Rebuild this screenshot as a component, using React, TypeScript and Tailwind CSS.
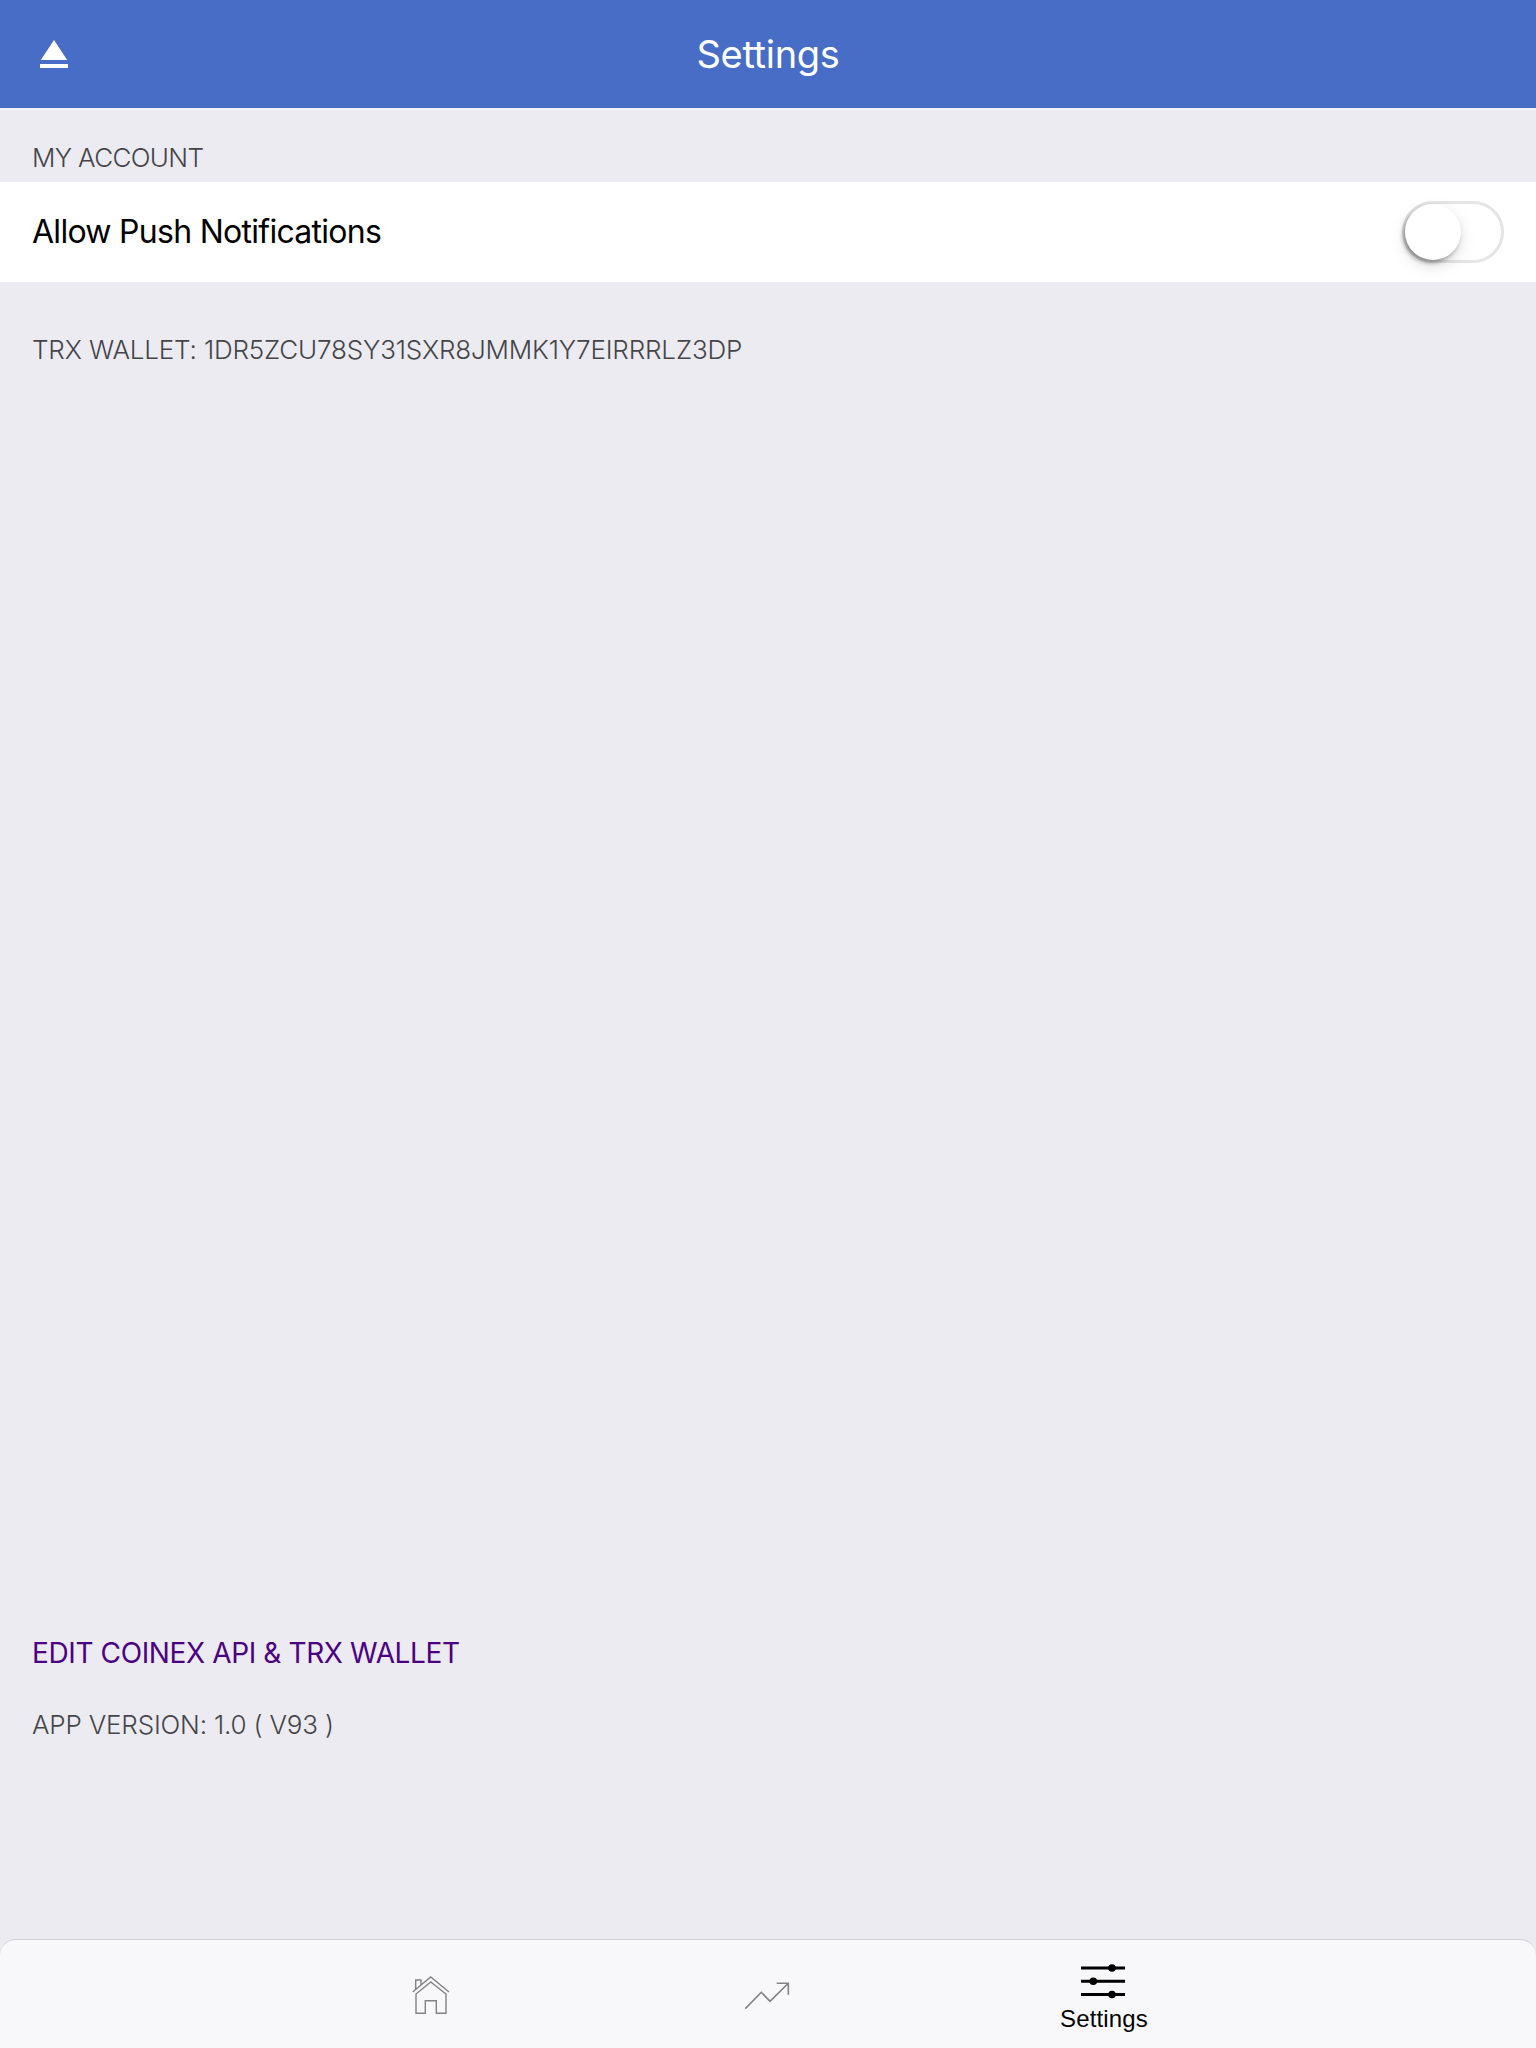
function EjectIcon() {
  return (
    <svg className="ml-10 h-7 w-7" viewBox="0 0 28 28" fill="currentColor">
      <path d="M14 0L27.2 20H.8zM0 24h28v4H0z" />
    </svg>
  );
}

function HomeIcon() {
  return (
    <svg className="mt-[34px] h-[42px] w-[42px]" viewBox="0 0 42 42" fill="none" stroke="#828284" strokeWidth="1.4">
      <path d="M1.7 18L19.7 3 38 18M19.7 8L5 20V39.3h9.3V26.7h11v12.6H35V20zM4.7 15.3V6H10v5" />
    </svg>
  );
}

function TrendIcon() {
  return (
    <svg className="mt-[42px] h-7 w-[46px]" viewBox="0 0 46 28" fill="none" stroke="#828284" strokeWidth="1.6">
      <path d="M.3 26.7L16.3 10.3 25 19.3 43.3 1.3M31.7 1.3H43.3V12.7" />
    </svg>
  );
}

function SlidersIcon() {
  return (
    <svg className="mt-[24px] h-9 w-[46px]" viewBox="0 0 46 36" fill="currentColor">
      <path d="M0 2.5h44v3H0zM0 15.7h44v3H0zM0 29h44v3H0z" />
      <circle cx="31" cy="4" r="3.8" />
      <circle cx="12.3" cy="17.2" r="3.8" />
      <circle cx="31" cy="30.5" r="3.8" />
    </svg>
  );
}

export default function App() {
  return (
    <div className="flex h-[2048px] w-[1536px] flex-col overflow-hidden bg-[#ebebf1] font-['Inter',sans-serif] whitespace-nowrap">
      <header className="grid h-[108px] shrink-0 grid-cols-3 items-center bg-[#486dc6] text-white">
        <EjectIcon />
        <h1 className="text-center text-[38px] tracking-[-0.3px]">Settings</h1>
      </header>
      <h2 className="flex h-[74px] shrink-0 items-end border-t-2 border-[#f3f3f6] px-8 pb-[5px] text-[26px] leading-[39px] font-light tracking-[-0.65px] text-[#454549]">MY ACCOUNT</h2>
      <div className="flex h-[100px] shrink-0 items-center justify-between bg-white px-8 text-[32px] text-black">
        <span className="tracking-[-0.72px]">Allow Push Notifications</span>
        <span className="flex h-[62px] w-[102px] rounded-full border-[3px] border-[#e5e5e5]">
          <span className="h-14 w-14 rounded-full bg-white shadow-[-2px_3px_4px_#0005,0_6px_16px_#0002]" />
        </span>
      </div>
      <p className="mt-[48px] px-8 text-[26px] leading-10 font-light tracking-[-0.16px] text-[#454549]">TRX WALLET: 1DR5ZCU78SY31SXR8JMMK1Y7EIRRRLZ3DP</p>
      <a className="mt-auto px-8 text-[28px] leading-10 tracking-[-0.38px] text-[#4b0082]">EDIT COINEX API &amp; TRX WALLET</a>
      <p className="mt-8 px-8 text-[26px] leading-10 font-light tracking-[-0.18px] text-[#454549]">APP VERSION: 1.0 ( V93 )</p>
      <nav className="mt-[194px] flex h-[109px] shrink-0 justify-center rounded-t-[16px] border-t border-[#d0d0d5] bg-[#f8f8fb]">
        <div className="flex w-[336px] justify-center"><HomeIcon /></div>
        <div className="flex w-[336px] justify-center"><TrendIcon /></div>
        <div className="flex w-[336px] flex-col items-center text-black">
          <SlidersIcon />
          <span className="mt-[5px] font-['Liberation_Sans',sans-serif] text-[24px] leading-7 tracking-[0.15px]">Settings</span>
        </div>
      </nav>
    </div>
  );
}
